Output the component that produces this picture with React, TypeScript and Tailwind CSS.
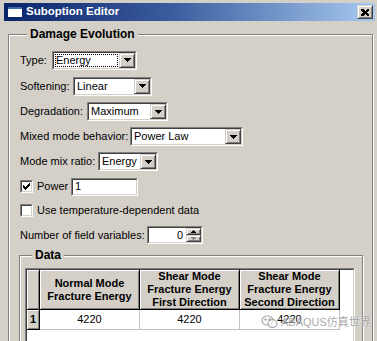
import React from "react";

function Tri({ color = "#000" }: { color?: string }) {
  return (
    <svg width="7" height="4" viewBox="0 0 7 4" shapeRendering="crispEdges">
      <rect x="0" y="0" width="7" height="1" fill={color} />
      <rect x="1" y="1" width="5" height="1" fill={color} />
      <rect x="2" y="2" width="3" height="1" fill={color} />
      <rect x="3" y="3" width="1" height="1" fill={color} />
    </svg>
  );
}

function SmallTri({ up, color }: { up?: boolean; color: string }) {
  return (
    <svg width="5" height="3" viewBox="0 0 5 3" shapeRendering="crispEdges">
      {up ? (
        <>
          <rect x="2" y="0" width="1" height="1" fill={color} />
          <rect x="1" y="1" width="3" height="1" fill={color} />
          <rect x="0" y="2" width="5" height="1" fill={color} />
        </>
      ) : (
        <>
          <rect x="0" y="0" width="5" height="1" fill={color} />
          <rect x="1" y="1" width="3" height="1" fill={color} />
          <rect x="2" y="2" width="1" height="1" fill={color} />
        </>
      )}
    </svg>
  );
}

function Sunken({ className, children }: { className: string; children?: React.ReactNode }) {
  return (
    <div className={"shrink-0 border border-t-[#808080] border-l-[#808080] border-b-white border-r-white " + className}>
      <div className="flex h-full w-full border border-t-[#404040] border-l-[#404040] border-b-[#D4D0C8] border-r-[#D4D0C8] bg-white">
        {children}
      </div>
    </div>
  );
}

function Combo({ className, value, focus }: { className: string; value: string; focus?: boolean }) {
  return (
    <Sunken className={"h-[19px] " + className}>
      {focus ? (
        <div className="m-[1px] flex min-w-0 flex-1 items-center border border-dotted border-black pl-[0px] leading-none">
          {value}
        </div>
      ) : (
        <div className="flex min-w-0 flex-1 items-center pl-[2px] leading-none">{value}</div>
      )}
      <div className="flex h-full w-[16px] items-center justify-center border border-t-[#D4D0C8] border-l-[#D4D0C8] border-b-[#404040] border-r-[#404040] bg-[#D4D0C8] shadow-[inset_1px_1px_0_#fff,inset_-1px_-1px_0_#808080]">
        <Tri />
      </div>
    </Sunken>
  );
}

function Check({ checked }: { checked?: boolean }) {
  return (
    <Sunken className="h-[13px] w-[13px]">
      {checked && (
        <svg width="7" height="7" viewBox="0 0 7 7" shapeRendering="crispEdges" className="m-auto">
          <rect x="6" y="0" width="1" height="1" fill="#000" />
          <rect x="5" y="1" width="2" height="1" fill="#000" />
          <rect x="0" y="2" width="1" height="1" fill="#000" />
          <rect x="4" y="2" width="3" height="1" fill="#000" />
          <rect x="0" y="3" width="2" height="1" fill="#000" />
          <rect x="3" y="3" width="3" height="1" fill="#000" />
          <rect x="0" y="4" width="5" height="1" fill="#000" />
          <rect x="1" y="5" width="3" height="1" fill="#000" />
          <rect x="2" y="6" width="1" height="1" fill="#000" />
        </svg>
      )}
    </Sunken>
  );
}

const raised =
  "bg-[#D4D0C8] border border-t-[#D4D0C8] border-l-[#D4D0C8] border-b-[#404040] border-r-[#404040] shadow-[inset_1px_1px_0_#fff,inset_-1px_-1px_0_#808080]";

function HeaderCell({ lines }: { lines: string[] }) {
  return (
    <div className="flex h-full w-[100px] shrink-0 flex-col items-center justify-center border-r border-b border-black bg-[#D4D0C8] text-[11px] font-bold leading-[13px] shadow-[inset_1px_1px_0_#fff,inset_-1px_-1px_0_#808080]">
      {lines.map((l) => (
        <div key={l} className="whitespace-nowrap">
          {l}
        </div>
      ))}
    </div>
  );
}

function DataCell({ v }: { v: string }) {
  return (
    <div className="flex h-full w-[100px] shrink-0 items-center justify-center border-r border-b border-[#C0C0C0] bg-white">
      {v}
    </div>
  );
}

export default function App() {
  return (
    <div className="relative h-[341px] w-[377px] overflow-hidden bg-[#D4D0C8] pt-[3px] font-['Liberation_Sans',Arial,sans-serif] text-[11px] text-black">
      {/* Title bar */}
      <div className="ml-[4px] mr-[2px] flex h-[18px] items-center bg-[linear-gradient(to_right,#0A246A_0%,#3A5C9E_45%,#A6CAF0_100%)] pl-[3px] pr-[2px]">
        <svg width="16" height="12" viewBox="0 0 16 12" shapeRendering="crispEdges">
          <rect x="0" y="0" width="16" height="12" fill="#0A246A" />
          <rect x="1" y="1" width="14" height="2" fill="#3A6EA5" />
          <rect x="1" y="3" width="14" height="8" fill="#fff" />
        </svg>
        <span className="ml-[3px] text-[11.5px] font-bold leading-none text-white">Suboption Editor</span>
        <div className={"ml-auto flex h-[14px] w-[16px] items-center justify-center " + raised}>
          <svg width="8" height="7" viewBox="0 0 8 7" shapeRendering="crispEdges">
            <path d="M0 0h2l2 2 2-2h2v1l-2 2.5 2 2.5v1h-2l-2-2-2 2h-2v-1l2-2.5-2-2.5z" fill="#000" />
          </svg>
        </div>
      </div>

      {/* Damage Evolution group */}
      <fieldset className="ml-[8px] mt-[6px] w-[365px] border border-[#808080] pb-[10px] pl-[10px] pt-[6px] shadow-[inset_1px_1px_0_#fff,1px_1px_0_#fff]">
        <legend className="ml-[8px] bg-[#D4D0C8] px-[3px] text-[12px] font-bold leading-[14px]">Damage Evolution</legend>

        <div className="flex h-[26px] items-center pl-[1px]">
          <span className="w-[32px]">Type:</span>
          <Combo className="w-[85px]" value="Energy" focus />
        </div>
        <div className="flex h-[26px] items-center pl-[1px]">
          <span className="w-[53px]">Softening:</span>
          <Combo className="w-[79px]" value="Linear" />
        </div>
        <div className="flex h-[25px] items-center pl-[1px]">
          <span className="w-[67px]">Degradation:</span>
          <Combo className="w-[81px]" value="Maximum" />
        </div>
        <div className="flex h-[25px] items-center pl-[1px]">
          <span className="w-[110px]">Mixed mode behavior:</span>
          <Combo className="w-[113px]" value="Power Law" />
        </div>
        <div className="flex h-[25px] items-center pl-[1px]">
          <span className="w-[78px]">Mode mix ratio:</span>
          <Combo className="w-[60px]" value="Energy" />
        </div>
        <div className="flex h-[25px] items-center pl-[1px]">
          <Check checked />
          <span className="ml-[4px] w-[34px]">Power</span>
          <Sunken className="h-[18px] w-[67px]">
            <div className="flex flex-1 items-center pl-[2px] leading-none">1</div>
          </Sunken>
        </div>
        <div className="flex h-[23px] items-center pl-[1px]">
          <Check />
          <span className="ml-[4px]">Use temperature-dependent data</span>
        </div>
        <div className="flex h-[26px] items-center pl-[1px]">
          <span className="w-[127px]">Number of field variables:</span>
          <Sunken className="h-[18px] w-[56px]">
            <div className="flex flex-1 items-center justify-end pr-[3px] leading-none">0</div>
            <div className="flex w-[15px] flex-col">
              <div className={"flex flex-1 items-center justify-center " + raised}>
                <SmallTri up color="#000" />
              </div>
              <div className={"flex flex-1 items-center justify-center " + raised}>
                <SmallTri color="#808080" />
              </div>
            </div>
          </Sunken>
        </div>

        {/* Data group */}
        <fieldset className="w-[344px] border border-[#808080] pb-[10px] pl-[5px] pt-[6px] shadow-[inset_1px_1px_0_#fff,1px_1px_0_#fff]">
          <legend className="ml-[7px] bg-[#D4D0C8] px-[3px] text-[12px] font-bold leading-[14px]">Data</legend>
          <div className="h-[90px] w-[330px] border border-t-[#808080] border-l-[#808080] border-b-white border-r-white">
            <div className="h-full w-full border border-t-[#404040] border-l-[#404040] border-b-[#D4D0C8] border-r-[#D4D0C8] bg-white">
              <div className="flex h-[40px]">
                <div className="h-full w-[13px] shrink-0 border-r border-b border-black bg-[#D4D0C8] shadow-[inset_1px_1px_0_#fff,inset_-1px_-1px_0_#808080]" />
                <HeaderCell lines={["Normal Mode", "Fracture Energy"]} />
                <HeaderCell lines={["Shear Mode", "Fracture Energy", "First Direction"]} />
                <HeaderCell lines={["Shear Mode", "Fracture Energy", "Second Direction"]} />
              </div>
              <div className="flex h-[20px]">
                <div className="flex h-full w-[13px] shrink-0 items-center justify-center border-r border-b border-black bg-[#D4D0C8] font-bold shadow-[inset_1px_1px_0_#fff,inset_-1px_-1px_0_#808080]">
                  1
                </div>
                <DataCell v="4220" />
                <DataCell v="4220" />
                <DataCell v="4220" />
              </div>
            </div>
          </div>
        </fieldset>
      </fieldset>

      {/* Watermark */}
      <div className="pointer-events-none absolute left-[261px] top-[314px] flex items-center gap-[3px] font-['Liberation_Sans','Noto_Sans_CJK_SC',sans-serif] text-[11px] text-[rgba(140,140,140,0.75)] [text-shadow:0_0_2px_#fff]">
        <svg width="17" height="14" viewBox="0 0 17 14" fill="none" stroke="rgba(150,150,150,0.8)" strokeWidth="1.2">
          <ellipse cx="6.5" cy="5.5" rx="5.5" ry="4.5" />
          <ellipse cx="11.5" cy="8.5" rx="4.5" ry="3.8" fill="rgba(255,255,255,0.6)" />
          <circle cx="4.5" cy="4.5" r="0.6" fill="rgba(150,150,150,0.8)" />
          <circle cx="8.5" cy="4.5" r="0.6" fill="rgba(150,150,150,0.8)" />
        </svg>
        <span className="whitespace-nowrap">ABAQUS仿真世界</span>
      </div>
    </div>
  );
}
